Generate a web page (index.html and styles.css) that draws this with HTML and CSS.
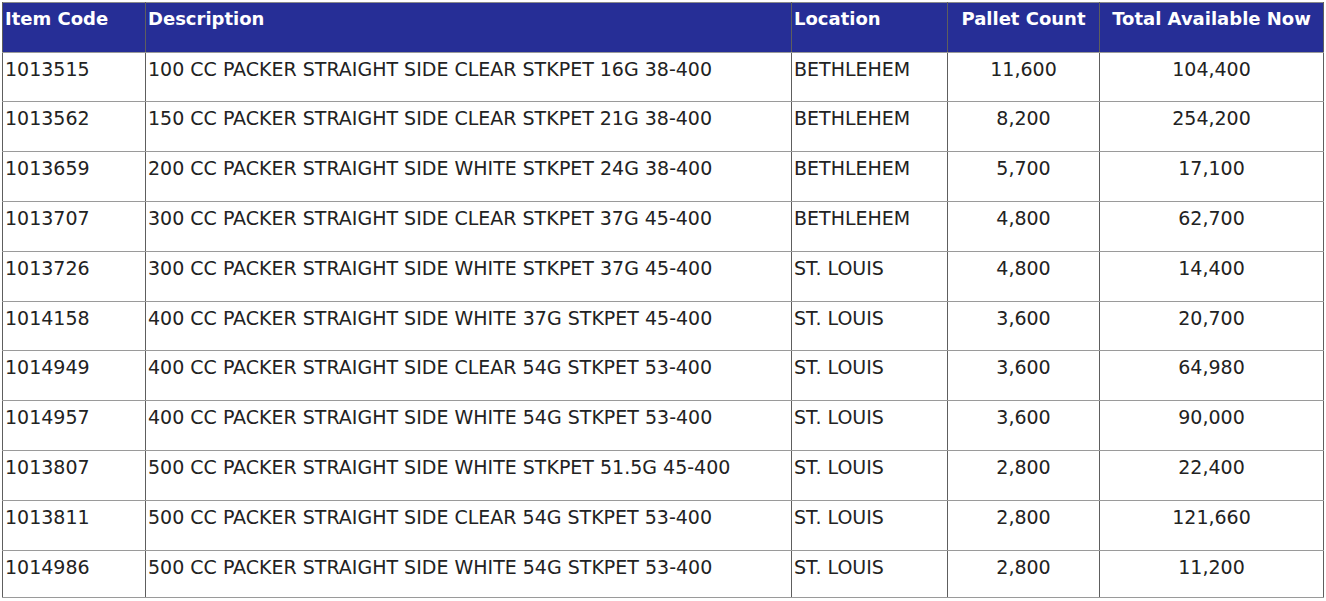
FILE: index.html
```html
<!DOCTYPE html>
<html lang="en">
<head>
<meta charset="utf-8">
<title>Inventory</title>
<link rel="stylesheet" href="styles.css">
</head>
<body>
<table class="inv">
  <colgroup>
    <col class="c-code"><col class="c-desc"><col class="c-loc"><col class="c-pal"><col class="c-tot">
  </colgroup>
  <thead>
    <tr><th>Item Code</th><th>Description</th><th>Location</th><th class="num">Pallet Count</th><th class="num">Total Available Now</th></tr>
  </thead>
  <tbody>
    <tr><td>1013515</td><td>100 CC PACKER STRAIGHT SIDE CLEAR STKPET 16G 38-400</td><td>BETHLEHEM</td><td class="num">11,600</td><td class="num">104,400</td></tr>
    <tr><td>1013562</td><td>150 CC PACKER STRAIGHT SIDE CLEAR STKPET 21G 38-400</td><td>BETHLEHEM</td><td class="num">8,200</td><td class="num">254,200</td></tr>
    <tr><td>1013659</td><td>200 CC PACKER STRAIGHT SIDE WHITE STKPET 24G 38-400</td><td>BETHLEHEM</td><td class="num">5,700</td><td class="num">17,100</td></tr>
    <tr><td>1013707</td><td>300 CC PACKER STRAIGHT SIDE CLEAR STKPET 37G 45-400</td><td>BETHLEHEM</td><td class="num">4,800</td><td class="num">62,700</td></tr>
    <tr><td>1013726</td><td>300 CC PACKER STRAIGHT SIDE WHITE STKPET 37G 45-400</td><td>ST. LOUIS</td><td class="num">4,800</td><td class="num">14,400</td></tr>
    <tr><td>1014158</td><td>400 CC PACKER STRAIGHT SIDE WHITE 37G STKPET 45-400</td><td>ST. LOUIS</td><td class="num">3,600</td><td class="num">20,700</td></tr>
    <tr><td>1014949</td><td>400 CC PACKER STRAIGHT SIDE CLEAR 54G STKPET 53-400</td><td>ST. LOUIS</td><td class="num">3,600</td><td class="num">64,980</td></tr>
    <tr><td>1014957</td><td>400 CC PACKER STRAIGHT SIDE WHITE 54G STKPET 53-400</td><td>ST. LOUIS</td><td class="num">3,600</td><td class="num">90,000</td></tr>
    <tr><td>1013807</td><td>500 CC PACKER STRAIGHT SIDE WHITE STKPET 51.5G 45-400</td><td>ST. LOUIS</td><td class="num">2,800</td><td class="num">22,400</td></tr>
    <tr><td>1013811</td><td>500 CC PACKER STRAIGHT SIDE CLEAR 54G STKPET 53-400</td><td>ST. LOUIS</td><td class="num">2,800</td><td class="num">121,660</td></tr>
    <tr><td>1014986</td><td>500 CC PACKER STRAIGHT SIDE WHITE 54G STKPET 53-400</td><td>ST. LOUIS</td><td class="num">2,800</td><td class="num">11,200</td></tr>
  </tbody>
</table>
</body>
</html>
```
FILE: styles.css
```css
html, body {
  margin: 0;
  padding: 0;
  background: #ffffff;
}
body {
  padding: 2px;
  font-family: "DejaVu Sans", "Liberation Sans", sans-serif;
  font-size: 19px;
  color: #222222;
}
.inv {
  border-collapse: collapse;
  table-layout: fixed;
  width: 1321px;
  border: 1px solid #8a8a8a;
}
.c-code { width: 143px; }
.c-desc { width: 646px; }
.c-loc { width: 156px; }
.c-pal { width: 152px; }
.c-tot { width: 224px; }
.inv thead tr {
  height: 49.6px;
}
.inv tbody tr {
  height: 49.8px;
}
.inv tbody tr:last-child {
  height: 47.8px;
}
.inv th, .inv td {
  vertical-align: top;
  text-align: left;
  padding: 6px 2px 0 2px;
  border-left: 1px solid #5e5e5e;
  border-right: 1px solid #5e5e5e;
  border-bottom: 1px solid #9a9a9a;
  white-space: nowrap;
  line-height: 21px;
}
.inv th {
  background: #262e96;
  color: #ffffff;
  font-size: 18px;
  font-weight: bold;
  padding-top: 5px;
}
.inv .num {
  text-align: center;
}
```
